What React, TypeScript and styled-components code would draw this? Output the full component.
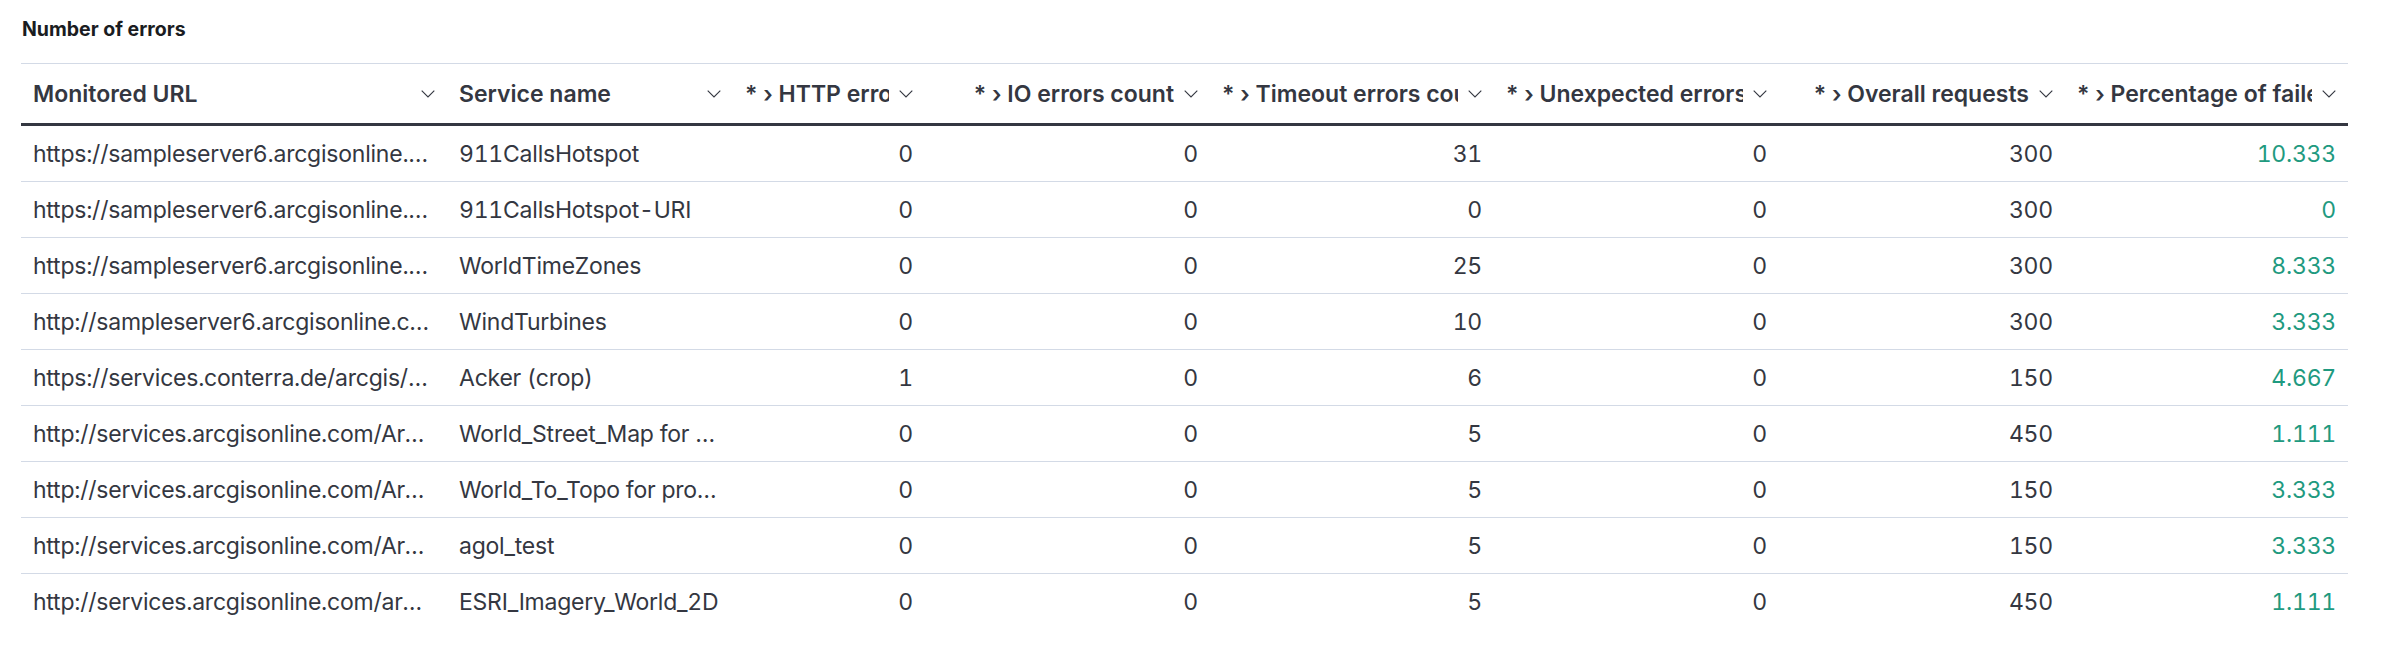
import React from "react";
import styled, { createGlobalStyle } from "styled-components";

const GlobalStyle = createGlobalStyle`
  html, body { margin: 0; padding: 0; background: #ffffff; }
  body { font-family: Inter, "Noto Sans", sans-serif; -webkit-font-smoothing: antialiased; }
`;

const Page = styled.div`
  padding: 0 41px 0 21px;
  font-family: Inter, "Noto Sans", sans-serif;
`;

const Title = styled.h2`
  margin: 0;
  padding: 16px 0 0 1px;
  height: 27px;
  margin-bottom: 20px;
  font-size: 19.5px;
  line-height: 27px;
  font-weight: 700;
  color: #1a1c21;
`;

const Table = styled.table`
  table-layout: fixed;
  width: 2327px;
  border-collapse: separate;
  border-spacing: 0;
`;

const HeadCell = styled.th<{ $numeric?: boolean }>`
  height: 59px;
  padding: 0 12px;
  border-top: 1px solid #d3dae6;
  border-bottom: 3px solid #343741;
  text-align: ${(p) => (p.$numeric ? "right" : "left")};
  vertical-align: middle;
`;

const HeadInner = styled.div<{ $numeric?: boolean }>`
  display: flex;
  align-items: center;
  justify-content: ${(p) => (p.$numeric ? "flex-end" : "space-between")};
  gap: 10px;
  min-width: 0;
`;

const HeadLabel = styled.span`
  flex: 0 1 auto;
  min-width: 0;
  overflow: hidden;
  white-space: nowrap;
  font-size: 23px;
  line-height: 34px;
  font-weight: 600;
  color: #343741;
`;

const Chevron = styled.svg`
  flex: 0 0 auto;
  width: 14px;
  height: 8px;
`;

const Cell = styled.td<{ $numeric?: boolean; $tone?: "success" }>`
  height: 55px;
  padding: 0 12px;
  border-bottom: 1px solid #d3dae6;
  font-size: 23px;
  line-height: 34px;
  font-weight: 400;
  letter-spacing: -0.01em;
  font-variant-numeric: tabular-nums;
  color: ${(p) => (p.$tone === "success" ? "#1f9a80" : "#343741")};
  text-align: ${(p) => (p.$numeric ? "right" : "left")};
  white-space: nowrap;
  overflow: hidden;
  text-overflow: ellipsis;
  vertical-align: middle;
`;

const Row = styled.tr`
  &:last-child td { border-bottom: none; }
`;

const ChevronIcon = () => (
  <Chevron viewBox="0 0 14 8" fill="none">
    <polyline points="0.7,0.7 7,7 13.3,0.7" stroke="#343741" strokeWidth="1.1" />
  </Chevron>
);

type Col = { label: string; width: number; numeric?: boolean };

const columns: Col[] = [
  { label: "Monitored URL", width: 426 },
  { label: "Service name", width: 286 },
  { label: "* › HTTP errors count", width: 192, numeric: true },
  { label: "* › IO errors count", width: 285, numeric: true },
  { label: "* › Timeout errors count", width: 284, numeric: true },
  { label: "* › Unexpected errors count", width: 285, numeric: true },
  { label: "* › Overall requests", width: 286, numeric: true },
  { label: "* › Percentage of failed requests", width: 283, numeric: true },
];

type Item = {
  url: string;
  name: string;
  http: number;
  io: number;
  timeout: number;
  unexpected: number;
  overall: number;
  pct: string;
};

const rows: Item[] = [
  { url: "https://sampleserver6.arcgisonline.com/arcgis/rest/services/911CallsHotspot/MapServer", name: "911CallsHotspot", http: 0, io: 0, timeout: 31, unexpected: 0, overall: 300, pct: "10.333" },
  { url: "https://sampleserver6.arcgisonline.com/arcgis/rest/services/911CallsHotspot/GPServer", name: "911CallsHotspot-URI", http: 0, io: 0, timeout: 0, unexpected: 0, overall: 300, pct: "0" },
  { url: "https://sampleserver6.arcgisonline.com/arcgis/rest/services/WorldTimeZones/MapServer", name: "WorldTimeZones", http: 0, io: 0, timeout: 25, unexpected: 0, overall: 300, pct: "8.333" },
  { url: "http://sampleserver6.arcgisonline.com/arcgis/rest/services/WindTurbines/MapServer", name: "WindTurbines", http: 0, io: 0, timeout: 10, unexpected: 0, overall: 300, pct: "3.333" },
  { url: "https://services.conterra.de/arcgis/rest/services/Acker/MapServer", name: "Acker (crop)", http: 1, io: 0, timeout: 6, unexpected: 0, overall: 150, pct: "4.667" },
  { url: "http://services.arcgisonline.com/ArcGIS/rest/services/World_Street_Map/MapServer", name: "World_Street_Map for production", http: 0, io: 0, timeout: 5, unexpected: 0, overall: 450, pct: "1.111" },
  { url: "http://services.arcgisonline.com/ArcGIS/rest/services/World_Topo_Map/MapServer", name: "World_To_Topo for production", http: 0, io: 0, timeout: 5, unexpected: 0, overall: 150, pct: "3.333" },
  { url: "http://services.arcgisonline.com/ArcGIS/rest/services/World_Imagery/MapServer", name: "agol_test", http: 0, io: 0, timeout: 5, unexpected: 0, overall: 150, pct: "3.333" },
  { url: "http://services.arcgisonline.com/arcgis/rest/services/ESRI_Imagery_World_2D/MapServer", name: "ESRI_Imagery_World_2D", http: 0, io: 0, timeout: 5, unexpected: 0, overall: 450, pct: "1.111" },
];

export default function App() {
  return (
    <>
      <GlobalStyle />
      <Page>
        <Title>Number of errors</Title>
        <Table>
          <colgroup>
            {columns.map((c) => (
              <col key={c.label} style={{ width: c.width }} />
            ))}
          </colgroup>
          <thead>
            <tr>
              {columns.map((c) => (
                <HeadCell key={c.label} $numeric={c.numeric}>
                  <HeadInner $numeric={c.numeric}>
                    <HeadLabel>{c.label}</HeadLabel>
                    <ChevronIcon />
                  </HeadInner>
                </HeadCell>
              ))}
            </tr>
          </thead>
          <tbody>
            {rows.map((r, i) => (
              <Row key={i}>
                <Cell>{r.url}</Cell>
                <Cell>{r.name}</Cell>
                <Cell $numeric>{r.http}</Cell>
                <Cell $numeric>{r.io}</Cell>
                <Cell $numeric>{r.timeout}</Cell>
                <Cell $numeric>{r.unexpected}</Cell>
                <Cell $numeric>{r.overall}</Cell>
                <Cell $numeric $tone="success">{r.pct}</Cell>
              </Row>
            ))}
          </tbody>
        </Table>
      </Page>
    </>
  );
}
